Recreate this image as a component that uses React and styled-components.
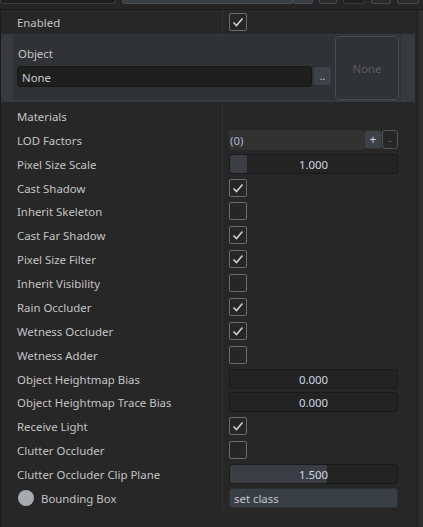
import React from "react";
import styled, { createGlobalStyle } from "styled-components";

const Global = createGlobalStyle`
  html, body { margin: 0; padding: 0; background: #272727; }
  body { font-family: "Noto Sans", "Open Sans", sans-serif; font-size: 11.4px; color: #c6c6c6; }
  * { box-sizing: border-box; }
`;

const Page = styled.div`
  width: 423px;
  height: 527px;
  background: #272727;
  display: flex;
  flex-direction: column;
  overflow: hidden;
`;

const TopBar = styled.div`
  height: 10px;
  flex: none;
  background: #252525;
  border-bottom: 1px solid #1b1b1b;
  display: flex;
  align-items: flex-start;
  gap: 6px;
`;

const Tab = styled.div`
  height: ${(p) => p.$h || 4}px;
  width: ${(p) => p.$w}px;
  margin-left: ${(p) => p.$ml || 0}px;
  background: ${(p) => p.$bg || "#1f1f1f"};
  border: 1px solid ${(p) => p.$bd || "#3a3a3a"};
  border-top: none;
  border-radius: 0 0 3px 3px;
`;

const Body = styled.div`
  flex: 1;
  display: flex;
  min-height: 0;
`;

const Panel = styled.div`
  width: 418px;
  border-left: 1px solid #1c1c1c;
  border-right: 1px solid #1d1d1d;
  display: flex;
  flex-direction: column;
`;

const Gutter = styled.div`
  flex: 1;
  background: #2e2e2e;
`;

const Row = styled.div`
  display: grid;
  grid-template-columns: 221px 1fr;
  height: ${(p) => p.$h || 23.875}px;
  align-items: stretch;
`;

const Label = styled.div`
  display: flex;
  align-items: center;
  gap: 7px;
  padding: 1px 0 0 16px;
  white-space: nowrap;
  color: #c4c4c4;
`;

const Cell = styled.div`
  border-left: 1px solid #333333;
  display: flex;
  align-items: center;
  padding-left: 6px;
  padding-right: 19px;
`;

const Box = styled.div`
  width: 18px;
  height: 18px;
  border: 1px solid #6c6c6c;
  border-radius: 2px;
  background: #262626;
  display: flex;
  align-items: center;
  justify-content: center;
`;

const Group = styled.div`
  height: 68px;
  margin: 0 2px 2px 0;
  background: #393a3c;
  padding: 1px 14px 2px 12px;
  display: flex;
`;

const GroupInner = styled.div`
  flex: 1;
  background: #313235;
  display: flex;
  padding: 0 2px 0 4px;
  gap: 3px;
`;

const GroupMain = styled.div`
  flex: 1;
  display: flex;
  flex-direction: column;
`;

const GroupTitle = styled.div`
  height: 31px;
  display: flex;
  align-items: flex-end;
  padding: 0 0 5px 1px;
  color: #c4c4c4;
`;

const PathRow = styled.div`
  display: flex;
  gap: 1px;
  align-items: flex-start;
`;

const PathInput = styled.div`
  flex: 1;
  height: 21px;
  background: #1f1f1f;
  border: 1px solid #171717;
  border-radius: 3px;
  display: flex;
  align-items: center;
  padding: 1px 0 0 4px;
  color: #c8ccd2;
`;

const SmallBtn = styled.div`
  width: ${(p) => p.$w || 19}px;
  height: ${(p) => p.$h || 20}px;
  border-radius: 3px;
  background: ${(p) => (p.$ghost ? "transparent" : "#3c4248")};
  border: 1px solid ${(p) => (p.$ghost ? "#555" : "#2e3236")};
  display: flex;
  align-items: center;
  justify-content: center;
  color: ${(p) => (p.$ghost ? "#666" : "#cfd6de")};
  font-size: ${(p) => p.$fs || 11}px;
  line-height: 1;
`;

const Preview = styled.div`
  width: 64px;
  height: 64px;
  margin-top: 1px;
  border: 1px solid #4a4b4d;
  border-radius: 4px;
  background: #313235;
  display: flex;
  align-items: center;
  justify-content: center;
  color: #5a5b5d;
`;

const ListField = styled.div`
  flex: 1;
  height: 20px;
  background: #323232;
  border-radius: 2px;
  display: flex;
  align-items: center;
  padding: 1px 0 0 1px;
  color: #a8b6cc;
`;

const Field = styled.div`
  position: relative;
  flex: 1;
  height: 20px;
  background: ${(p) => (p.$tone ? "#3a3f45" : "#232323")};
  border: 1px solid ${(p) => (p.$tone ? "#2d3136" : "#1a1a1a")};
  border-radius: 3px;
  display: flex;
  align-items: center;
  justify-content: ${(p) => (p.$left ? "flex-start" : "center")};
  padding: 1px 0 0 ${(p) => (p.$left ? 4 : 0)}px;
  color: ${(p) => (p.$left ? "#c2c6cc" : "#d2d8e2")};
  overflow: hidden;
`;

const Fill = styled.div`
  position: absolute;
  left: 0;
  top: 0;
  bottom: 0;
  background: #3a3e44;
  border-radius: 2px;
`;

const Value = styled.span`
  position: relative;
`;

const Dot = styled.span`
  width: 16px;
  height: 16px;
  border-radius: 50%;
  background: #a9aab0;
  margin-left: 1px;
`;

const Check = () => (
  <svg width="14" height="14" viewBox="0 0 14 14">
    <path d="M2.5 7.5 L5.5 10.5 L11.5 3.5" fill="none" stroke="#d0d0d0" strokeWidth="1.6" />
  </svg>
);

const CheckCell = ({ on }) => (
  <Cell>
    <Box>{on && <Check />}</Box>
  </Cell>
);

const boolRow = (label, on) => ({ label, kind: "bool", on });

const rows = [
  { label: "Materials", kind: "empty" },
  { label: "LOD Factors", kind: "list" },
  { label: "Pixel Size Scale", kind: "slider", value: "1.000", fill: 17 },
  boolRow("Cast Shadow", true),
  boolRow("Inherit Skeleton", false),
  boolRow("Cast Far Shadow", true),
  boolRow("Pixel Size Filter", true),
  boolRow("Inherit Visibility", false),
  boolRow("Rain Occluder", true),
  boolRow("Wetness Occluder", true),
  boolRow("Wetness Adder", false),
  { label: "Object Heightmap Bias", kind: "slider", value: "0.000", fill: 0 },
  { label: "Object Heightmap Trace Bias", kind: "slider", value: "0.000", fill: 0 },
  boolRow("Receive Light", true),
  boolRow("Clutter Occluder", false),
  { label: "Clutter Occluder Clip Plane", kind: "slider", value: "1.500", fill: 97 },
  { label: "Bounding Box", kind: "class" },
];

const renderValue = (r) => {
  switch (r.kind) {
    case "bool":
      return <CheckCell on={r.on} />;
    case "list":
      return (
        <Cell>
          <ListField>(0)</ListField>
          <SmallBtn $w={18} $h={19} $fs={12}>+</SmallBtn>
          <SmallBtn $w={16} $h={19} $ghost>-</SmallBtn>
        </Cell>
      );
    case "slider":
      return (
        <Cell>
          <Field>
            {r.fill > 0 && <Fill style={{ width: r.fill }} />}
            <Value>{r.value}</Value>
          </Field>
        </Cell>
      );
    case "class":
      return (
        <Cell>
          <Field $tone $left>set class</Field>
        </Cell>
      );
    default:
      return <Cell />;
  }
};

export default function App() {
  return (
    <Page>
      <Global />
      <TopBar>
        <Tab $w={116} $bg="#1e1e1e" $bd="#3c3c3c" />
        <Tab $w={171} $bg="#3a3f45" $bd="#4a4f55" />
        <Tab $w={20} $ml={-6} $bg="#3a3f45" $bd="#4a4f55" />
        <Tab $w={18} $bg="#2a2a2a" $bd="#4a4a4a" />
        <Tab $w={22} $bg="#1e1e1e" $bd="#3a3a3a" />
        <Tab $w={20} $bg="#2a2a2a" $bd="#4a4a4a" />
        <Tab $w={22} $bg="#2a2a2a" $bd="#4a4a4a" />
      </TopBar>
      <Body>
        <Panel>
          <Row $h={24}>
            <Label>Enabled</Label>
            <CheckCell on />
          </Row>
          <Group>
            <GroupInner>
              <GroupMain>
                <GroupTitle>Object</GroupTitle>
                <PathRow>
                  <PathInput>None</PathInput>
                  <SmallBtn $w={19} $h={20} $fs={10}>..</SmallBtn>
                </PathRow>
              </GroupMain>
              <Preview>None</Preview>
            </GroupInner>
          </Group>
          {rows.map((r) => (
            <Row key={r.label}>
              <Label>
                {r.kind === "class" && <Dot />}
                {r.label}
              </Label>
              {renderValue(r)}
            </Row>
          ))}
        </Panel>
        <Gutter />
      </Body>
    </Page>
  );
}
